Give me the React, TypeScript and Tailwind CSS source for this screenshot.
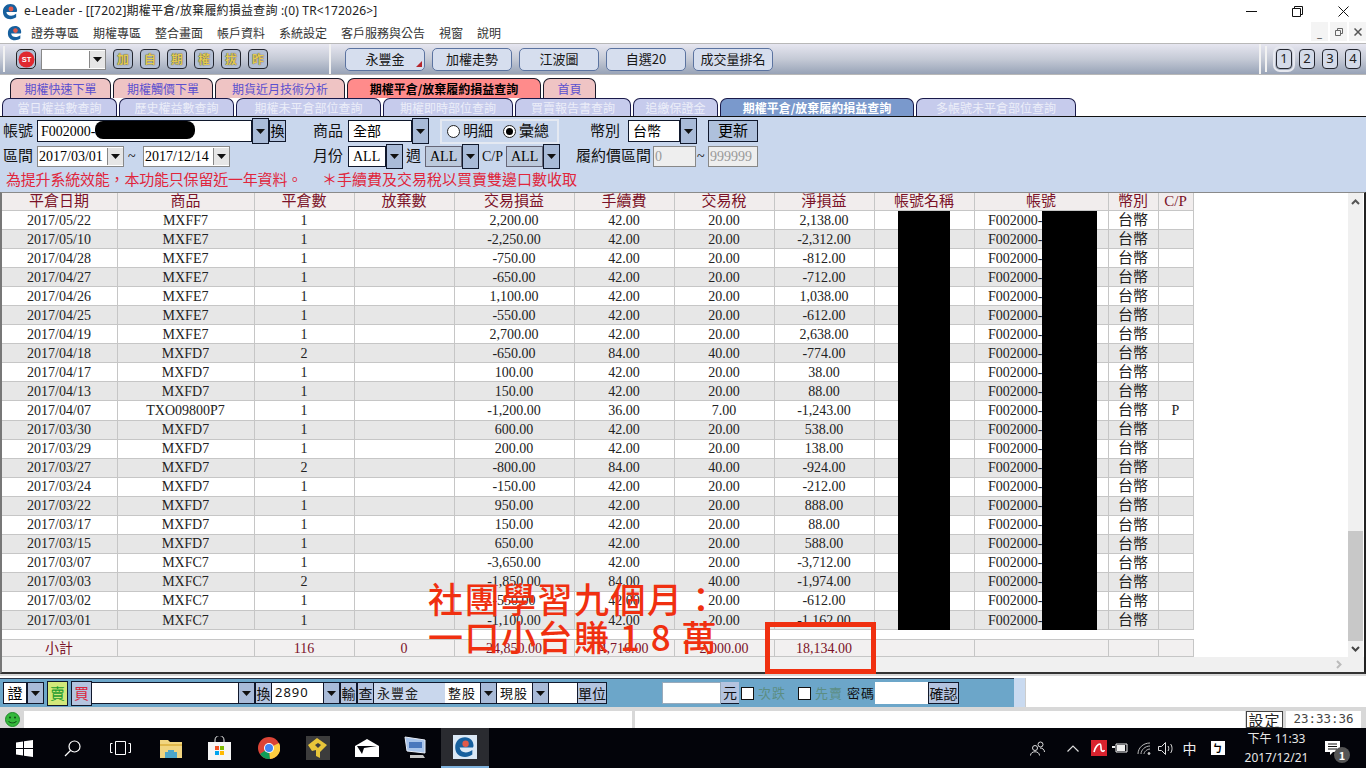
import React from 'react';

const rows = [
  ['2017/05/22', 'MXFF7', '1', '2,200.00', '42.00', '20.00', '2,138.00', ''],
  ['2017/05/10', 'MXFE7', '1', '-2,250.00', '42.00', '20.00', '-2,312.00', ''],
  ['2017/04/28', 'MXFE7', '1', '-750.00', '42.00', '20.00', '-812.00', ''],
  ['2017/04/27', 'MXFE7', '1', '-650.00', '42.00', '20.00', '-712.00', ''],
  ['2017/04/26', 'MXFE7', '1', '1,100.00', '42.00', '20.00', '1,038.00', ''],
  ['2017/04/25', 'MXFE7', '1', '-550.00', '42.00', '20.00', '-612.00', ''],
  ['2017/04/19', 'MXFE7', '1', '2,700.00', '42.00', '20.00', '2,638.00', ''],
  ['2017/04/18', 'MXFD7', '2', '-650.00', '84.00', '40.00', '-774.00', ''],
  ['2017/04/17', 'MXFD7', '1', '100.00', '42.00', '20.00', '38.00', ''],
  ['2017/04/13', 'MXFD7', '1', '150.00', '42.00', '20.00', '88.00', ''],
  ['2017/04/07', 'TXO09800P7', '1', '-1,200.00', '36.00', '7.00', '-1,243.00', 'P'],
  ['2017/03/30', 'MXFD7', '1', '600.00', '42.00', '20.00', '538.00', ''],
  ['2017/03/29', 'MXFD7', '1', '200.00', '42.00', '20.00', '138.00', ''],
  ['2017/03/27', 'MXFD7', '2', '-800.00', '84.00', '40.00', '-924.00', ''],
  ['2017/03/24', 'MXFD7', '1', '-150.00', '42.00', '20.00', '-212.00', ''],
  ['2017/03/22', 'MXFD7', '1', '950.00', '42.00', '20.00', '888.00', ''],
  ['2017/03/17', 'MXFD7', '1', '150.00', '42.00', '20.00', '88.00', ''],
  ['2017/03/15', 'MXFD7', '1', '650.00', '42.00', '20.00', '588.00', ''],
  ['2017/03/07', 'MXFC7', '1', '-3,650.00', '42.00', '20.00', '-3,712.00', ''],
  ['2017/03/03', 'MXFC7', '2', '-1,850.00', '84.00', '40.00', '-1,974.00', ''],
  ['2017/03/02', 'MXFC7', '1', '-550.00', '42.00', '20.00', '-612.00', ''],
  ['2017/03/01', 'MXFC7', '1', '-1,100.00', '42.00', '20.00', '-1,162.00', ''],
];

const headers = ['平倉日期', '商品', '平倉數', '放棄數', '交易損益', '手續費', '交易稅', '淨損益', '帳號名稱', '帳號', '幣別', 'C/P'];

const gridCols = 'grid grid-cols-[116px_137px_100px_100px_120px_100px_100px_100px_100px_134px_50px_35px] w-[1192px]';
const cell = 'flex items-center justify-center pr-px border-r border-b border-[#c6c6c6] overflow-hidden whitespace-nowrap';

const Logo = ({ size = 18 }: { size?: number }) => (
  <svg width={size} height={size} viewBox="0 0 18 18">
    <path d="M15.5 9.5H4.6c.4 2.6 2.4 4 5 4 2 0 3.7-.7 5.4-2v3.7c-1.7 1.3-3.7 1.9-6 1.9C4 17.100 1 14 1 9.200 1 4.300 4.300 1 9 1c4.300 0 7 3 7 7.200z" fill="#17609e" />
    <circle cx="9.500" cy="6.300" r="2.600" fill="#e25a4a" />
  </svg>
);

const Caret = () => (
  <svg width="9" height="5" viewBox="0 0 9 5"><path d="M0 0h9L4.500 5z" fill="#111" /></svg>
);

const Dd = ({ className = '' }: { className?: string }) => (
  <div className={`flex items-center justify-center bg-[#a9bbd8] border border-[#10182c] w-[17px] h-full shrink-0 ${className}`}>
    <Caret />
  </div>
);

const GreyDd = () => (
  <div className="flex items-center justify-center bg-[#e6e6e6] border-l border-[#888] w-[16px] h-[17px] shrink-0">
    <Caret />
  </div>
);

const ToolSquare = ({ t }: { t: string }) => (
  <div className="flex items-center justify-center w-[20px] h-[20px] mr-[7px] rounded-[4px] border border-[#23262f] bg-[#b3bfd4] text-[12px] leading-none font-bold text-[#e3cb52] [text-shadow:0_0_1px_#222]">{t}</div>
);

const ToolBtn = ({ t, mark }: { t: string; mark?: boolean }) => (
  <div className="relative flex items-center justify-center w-[80px] h-[23px] mr-[7px] rounded-[5px] border border-[#5b73a0] bg-[#d6deee] text-[13px] text-[#161616]">
    {t}
    {mark && <div className="absolute right-[2px] bottom-[3px] w-0 h-0 border-l-[6px] border-l-transparent border-b-[6px] border-b-[#b5252c]" />}
  </div>
);

const NumBtn = ({ t, ml }: { t: string; ml: string }) => (
  <div className={`flex items-center justify-center w-[16px] h-[20px] rounded-[4px] border border-[#23262f] bg-[#d4dbe9] font-['Noto_Sans'] text-[13px] text-[#222] ${ml}`}>{t}</div>
);

const TopTab = ({ t, w, active }: { t: string; w: string; active?: boolean }) => (
  <div className={`flex items-center justify-center h-[20px] rounded-t-[7px] border border-b-0 border-[#1a1a2a] text-[12px] ${w} ${active ? 'bg-[#ff8b8b] text-black font-bold' : 'bg-[#efc4c4] text-[#5b50cf]'}`}>{t}</div>
);

const SubTab = ({ t, w, active }: { t: string; w: string; active?: boolean }) => (
  <div className={`flex items-center justify-center h-[18px] rounded-t-[7px] border border-b-0 border-[#1a1a4a] text-[12px] ${w} ${active ? 'bg-[#7a99cc] text-white font-bold' : 'bg-[#c6cbec] text-[#eceef9]'}`}>{t}</div>
);

const Label = ({ t, className = '' }: { t: string; className?: string }) => (
  <span className={`text-[15px] leading-none text-[#111] whitespace-nowrap ${className}`}>{t}</span>
);

const OrderBtn = ({ t, w, className = '' }: { t: string; w: string; className?: string }) => (
  <div className={`flex items-center justify-center h-full border border-[#10182c] bg-[#b4c4df] text-[14px] text-[#111] shrink-0 ${w} ${className}`}>{t}</div>
);

const OrderField = ({ t = '', w, className = '' }: { t?: string; w: string; className?: string }) => (
  <div className={`flex items-center pl-[3px] h-full bg-white border-y border-[#10182c] text-[13px] tracking-[1px] text-[#111] shrink-0 ${w} ${className}`}>{t}</div>
);

const Slot = ({ w, children, className = '' }: { w: string; children: React.ReactNode; className?: string }) => (
  <div className={`flex items-center justify-center h-full shrink-0 ${w} ${className}`}>{children}</div>
);

export default function App() {
  return (
    <div className="relative w-[1366px] h-[768px] overflow-hidden bg-white flex flex-col font-['Noto_Sans_CJK_TC',sans-serif]">
      {/* title bar */}
      <div className="flex items-center h-[22px] shrink-0 pl-[2px]">
        <Logo size={17} />
        <span className="ml-[5px] text-[12px] tracking-[0.2px] text-[#222] whitespace-nowrap font-['Noto_Sans','Noto_Sans_CJK_TC',sans-serif]">e-Leader - [[7202]期權平倉/放棄履約損益查詢 :(0) TR&lt;172026&gt;]</span>
        <div className="ml-auto flex items-center h-full">
          <Slot w="w-[46px]">
            <svg width="11" height="11" viewBox="0 0 11 11"><path d="M0 5.500h11" stroke="#111" /></svg>
          </Slot>
          <Slot w="w-[46px]">
            <svg width="11" height="11" viewBox="0 0 11 11" fill="none" stroke="#111"><path d="M.5 2.500h8v8h-8zM2.500 2.500v-2h8v8h-2" /></svg>
          </Slot>
          <Slot w="w-[46px]">
            <svg width="11" height="11" viewBox="0 0 11 11" stroke="#111"><path d="M.5.500l10 10M10.500.500l-10 10" /></svg>
          </Slot>
        </div>
      </div>

      {/* menu bar */}
      <div className="flex items-center h-[21px] shrink-0 pl-[7px] text-[12px] text-[#333]">
        <Logo size={16} />
        <span className="ml-[8px] whitespace-nowrap">證券專區</span>
        <span className="ml-[14px] whitespace-nowrap">期權專區</span>
        <span className="ml-[14px] whitespace-nowrap">整合畫面</span>
        <span className="ml-[14px] whitespace-nowrap">帳戶資料</span>
        <span className="ml-[14px] whitespace-nowrap">系統設定</span>
        <span className="ml-[14px] whitespace-nowrap">客戶服務與公告</span>
        <span className="ml-[14px] whitespace-nowrap">視窗</span>
        <span className="ml-[14px] whitespace-nowrap">說明</span>
        <div className="ml-auto flex h-full gap-[2px] pb-[2px]">
          <div className="flex items-end justify-center w-[17px] pb-[3px] bg-[#f4f4f4] text-[9px] font-bold text-[#555] leading-none">_</div>
          <div className="flex items-center justify-center w-[17px] bg-[#f4f4f4]">
            <svg width="8" height="8" viewBox="0 0 8 8" fill="none" stroke="#666"><path d="M.5 2.500h5v5h-5zM2.500 2.500v-2h5v5h-2" /></svg>
          </div>
          <div className="flex items-center justify-center w-[17px] bg-[#f4f4f4]">
            <svg width="8" height="8" viewBox="0 0 8 8" stroke="#555" strokeWidth="1.500"><path d="M.5.500l7 7M7.500.500l-7 7" /></svg>
          </div>
        </div>
      </div>

      {/* toolbar */}
      <div className="flex items-center h-[32px] shrink-0 border-y border-[#b8b8b8] bg-linear-to-b from-[#e6e6f0] via-[#c5cad6] to-[#98a3b7]">
        <div className="ml-[3px] w-[2px] h-[26px] bg-[#f2f2f2]" />
        <div className="ml-[11px] flex items-center justify-center w-[20px] h-[20px] rounded-[5px] border border-[#222] bg-[#b3bfd4]">
          <svg width="17" height="17" viewBox="0 0 17 17">
            <circle cx="8.500" cy="8.500" r="8" fill="#e0282f" />
            <text x="8.500" y="11" textAnchor="middle" fontSize="7.500" fontWeight="700" fill="#fff" fontFamily="Liberation Sans">ST</text>
          </svg>
        </div>
        <div className="ml-[5px] flex items-center justify-end w-[65px] h-[21px] bg-white border border-[#888]">
          <GreyDd />
        </div>
        <div className="ml-[7px] flex items-center">
          <ToolSquare t="加" />
          <ToolSquare t="自" />
          <ToolSquare t="期" />
          <ToolSquare t="權" />
          <ToolSquare t="拔" />
          <ToolSquare t="昨" />
        </div>
        <div className="ml-[54px] w-[2px] h-[30px] bg-[#f2f2f2]" />
        <div className="ml-[14px] flex items-center">
          <ToolBtn t="永豐金" mark />
          <ToolBtn t="加權走勢" />
          <ToolBtn t="江波圖" />
          <ToolBtn t="自選20" />
          <ToolBtn t="成交量排名" />
        </div>
        <div className="ml-auto flex items-center pr-[5px]">
          <div className="w-[2px] h-[30px] bg-[#f2f2f2] mr-[4px]" />
          <div className="w-[2px] h-[26px] bg-[#f2f2f2]" />
          <NumBtn t="1" ml="ml-[9px] outline-2 outline-offset-1 outline-[#e6e8ef]" />
          <NumBtn t="2" ml="ml-[7px]" />
          <NumBtn t="3" ml="ml-[7px]" />
          <NumBtn t="4" ml="ml-[7px]" />
        </div>
      </div>

      {/* tabs */}
      <div className="mt-[3px] flex h-[20px] shrink-0 gap-[2px] pl-[10px]">
        <TopTab t="期權快速下單" w="w-[101px]" />
        <TopTab t="期權觸價下單" w="w-[100px]" />
        <TopTab t="期貨近月技術分析" w="w-[130px]" />
        <TopTab t="期權平倉/放棄履約損益查詢" w="w-[194px]" active />
        <TopTab t="首頁" w="w-[53px]" />
      </div>
      <div className="flex h-[18px] shrink-0 gap-[2px] pl-[2px]">
        <SubTab t="當日權益數查詢" w="w-[115px]" />
        <SubTab t="歷史權益數查詢" w="w-[115px]" />
        <SubTab t="期權未平倉部位查詢" w="w-[145px]" />
        <SubTab t="期權即時部位查詢" w="w-[130px]" />
        <SubTab t="買賣報告書查詢" w="w-[116px]" />
        <SubTab t="追繳保證金" w="w-[85px]" />
        <SubTab t="期權平倉/放棄履約損益查詢" w="w-[194px]" active />
        <SubTab t="多帳號未平倉部位查詢" w="w-[160px]" />
      </div>

      {/* query panel */}
      <div className="flex flex-col h-[76px] shrink-0 border-t border-[#111] bg-[#c9d7ed] font-['Liberation_Serif','Noto_Sans_CJK_TC',serif]">
        <div className="flex items-center h-[26px] mt-[1px] pl-[3px]">
          <Label t="帳號" className="w-[34px]" />
          <div className="flex items-center pl-[3px] w-[215px] h-[22px] bg-white border border-[#10182c] text-[14px]">F002000-</div>
          <Dd className="h-[22px]" />
          <div className="flex items-center justify-center w-[17px] h-[22px] bg-[#b4c4df] border border-[#10182c] text-[14px]">換</div>
          <Label t="商品" className="ml-[27px] w-[35px]" />
          <div className="flex items-center pl-[4px] w-[64px] h-[22px] bg-white border border-[#10182c] text-[14px]">全部</div>
          <Dd className="h-[22px]" />
          <div className="ml-[11px] flex items-center w-[119px] h-[25px] border-2 border-[#e4e9f2] pl-[5px]">
            <span className="flex items-center justify-center w-[13px] h-[13px] rounded-full bg-white border border-[#222]" />
            <Label t="明細" className="ml-[3px]" />
            <span className="ml-[10px] flex items-center justify-center w-[13px] h-[13px] rounded-full bg-white border border-[#222]">
              <span className="w-[7px] h-[7px] rounded-full bg-black" />
            </span>
            <Label t="彙總" className="ml-[3px]" />
          </div>
          <Label t="幣別" className="ml-[31px] w-[38px]" />
          <div className="flex items-center pl-[4px] w-[52px] h-[22px] bg-white border border-[#10182c] text-[14px]">台幣</div>
          <Dd className="h-[22px]" />
          <div className="ml-[11px] flex items-center justify-center w-[50px] h-[22px] bg-[#aec0dc] border border-[#10182c] text-[15px]">更新</div>
        </div>
        <div className="flex items-center h-[25px] pl-[3px]">
          <Label t="區間" className="w-[34px]" />
          <div className="flex items-center justify-between pl-[1px] w-[87px] h-[21px] bg-white border border-[#888] text-[14px]">
            2017/03/01
            <GreyDd />
          </div>
          <span className="ml-[4px] w-[15px] text-[14px]">~</span>
          <div className="flex items-center justify-between pl-[1px] w-[87px] h-[21px] bg-white border border-[#888] text-[14px]">
            2017/12/14
            <GreyDd />
          </div>
          <Label t="月份" className="ml-[83px] w-[35px]" />
          <div className="flex items-center pl-[4px] w-[38px] h-[21px] bg-white border border-[#10182c] text-[14px]">ALL</div>
          <Dd className="h-[21px] w-[16px]" />
          <Label t="週" className="ml-[3px] w-[19px]" />
          <div className="flex items-center pl-[4px] w-[37px] h-[21px] bg-[#bcc9dc] border border-[#667] text-[14px]">ALL</div>
          <Dd className="h-[21px]" />
          <span className="ml-[3px] w-[24px] text-[14px] text-[#111]">C/P</span>
          <div className="flex items-center pl-[4px] w-[37px] h-[21px] bg-[#bcc9dc] border border-[#667] text-[14px]">ALL</div>
          <Dd className="h-[21px] w-[16px]" />
          <Label t="履約價區間" className="ml-[16px] w-[77px]" />
          <div className="flex items-center pl-[1px] w-[43px] h-[21px] bg-[#eeeeee] border border-[#888] text-[14px] text-[#999]">0</div>
          <span className="ml-[1px] w-[11px] text-[14px]">~</span>
          <div className="flex items-center pl-[1px] w-[50px] h-[21px] bg-[#eeeeee] border border-[#888] text-[14px] text-[#999]">999999</div>
        </div>
        <div className="flex items-center h-[22px] pl-[6px] text-[15px] leading-none text-[#e0263c] whitespace-nowrap">
          <span className="w-[316px] tracking-[-0.2px]">為提升系統效能，本功能只保留近一年資料。</span>
          <span>＊手續費及交易稅以買賣雙邊口數收取</span>
        </div>
      </div>

      {/* results */}
      <div className="relative flex flex-col h-[482px] shrink-0 border-t border-[#8a8a8a] border-r-2 border-r-[#222] border-l-2 border-l-[#777] border-b-2 border-b-[#333] bg-white font-['Liberation_Serif','Noto_Sans_CJK_TC',serif] text-[14px] text-[#222]">
        <div className="flex h-[464px] shrink-0">
          <div className="flex flex-col w-[1345px]">
            <div className={`${gridCols} h-[18px] shrink-0 bg-[#f1eded] text-[15px] text-[#7b1228]`}>
              {headers.map(h => (
                <div key={h} className={cell}>{h}</div>
              ))}
            </div>
            {rows.map((r, i) => (
              <div key={r[0] + r[1]} className={`${gridCols} h-[19.05px] shrink-0 ${i % 2 ? 'bg-[#e7e7e7]' : 'bg-white'}`}>
                <div className={cell}>{r[0]}</div>
                <div className={cell}>{r[1]}</div>
                <div className={cell}>{r[2]}</div>
                <div className={cell}></div>
                <div className={cell}>{r[3]}</div>
                <div className={cell}>{r[4]}</div>
                <div className={cell}>{r[5]}</div>
                <div className={cell}>{r[6]}</div>
                <div className={cell}></div>
                <div className={`${cell} justify-start! pl-[13px]`}>F002000-</div>
                <div className={`${cell} text-[15px]`}>台幣</div>
                <div className={cell}>{r[7]}</div>
              </div>
            ))}
            <div className={`${gridCols} h-[18px] mt-[9px] shrink-0 bg-[#f2f0f0] border-t border-[#c6c6c6] text-[#7b1228]`}>
              <div className={cell}>小計</div>
              <div className={cell}></div>
              <div className={cell}>116</div>
              <div className={cell}>0</div>
              <div className={cell}>24,850.00</div>
              <div className={cell}>4,716.00</div>
              <div className={cell}>2,000.00</div>
              <div className={cell}>18,134.00</div>
              <div className={cell}></div>
              <div className={cell}></div>
              <div className={cell}></div>
              <div className={cell}></div>
            </div>
          </div>
          <div className="flex flex-col items-center justify-between w-[15px] ml-auto mr-[1px] bg-[#f0f0f0]">
            <div className="flex h-[338px] w-full items-start justify-center pt-[6px]">
              <svg width="9" height="6" viewBox="0 0 9 6" fill="none" stroke="#555" strokeWidth="2"><path d="M1 5l3.500-3.500L8 5" /></svg>
            </div>
            <div className="w-full h-[110px] bg-[#c8c8c8]" />
            <div className="flex h-[16px] w-full items-center justify-center">
              <svg width="9" height="6" viewBox="0 0 9 6" fill="none" stroke="#444" strokeWidth="2"><path d="M1 1l3.500 3.500L8 1" /></svg>
            </div>
          </div>
        </div>
        <div className="flex flex-1 items-center justify-end pr-[22px] bg-[#f0f0f0]">
          <svg width="6" height="9" viewBox="0 0 6 9" fill="none" stroke="#bbb" strokeWidth="2"><path d="M1 1l3.500 3.500L1 8" /></svg>
        </div>
      </div>

      {/* order bar */}
      <div className="flex h-[33px] shrink-0 bg-white border-t-2 border-[#d9d9d9] pt-[2px]">
        <div className="flex items-center w-[1014px] h-[29px] py-[3px] pl-[3px] bg-[#6ca6c9] border-t border-[#2a3548]">
          <div className="flex items-center justify-center w-[24px] h-full bg-white border border-[#10182c] text-[15px]">證</div>
          <Dd />
          <div className="ml-[3px] flex items-center justify-center w-[21px] h-[25px] bg-[#d2e87a] border border-[#10182c] text-[15px] text-[#1d9d2e]">賣</div>
          <div className="ml-[3px] flex items-center justify-center w-[21px] h-[25px] bg-[#b4c4df] border border-[#10182c] text-[15px] text-[#d9243c]">買</div>
          <OrderField w="w-[146px]" />
          <Dd />
          <OrderBtn t="換" w="w-[17px]" />
          <OrderField t="2890" w="w-[51px]" className="font-['Noto_Sans']" />
          <Dd />
          <OrderBtn t="輸" w="w-[17px]" />
          <OrderBtn t="查" w="w-[17px]" />
          <div className="flex items-center pl-[3px] w-[71px] h-full bg-[#c9d7ed] border-y border-[#10182c] text-[13px] tracking-[1px] text-[#222]">永豐金</div>
          <OrderField t="整股" w="w-[35px]" />
          <Dd />
          <OrderField t="現股" w="w-[35px]" />
          <Dd />
          <OrderField w="w-[28px]" className="border-0" />
          <OrderBtn t="單位" w="w-[30px]" />
          <div className="ml-[55px] w-[59px] h-full bg-white border border-[#9ab]" />
          <OrderBtn t="元" w="w-[18px]" className="border-0 border-b border-b-[#10182c]" />
          <div className="ml-[2px] w-[13px] h-[13px] bg-white border border-[#111]" />
          <span className="ml-[4px] w-[40px] text-[13px] tracking-[1px] text-[#5c8e84]">次跌</span>
          <div className="w-[13px] h-[13px] bg-white border border-[#111]" />
          <span className="ml-[4px] w-[32px] text-[13px] tracking-[1px] text-[#5c8e84]">先賣</span>
          <span className="w-[28px] text-[13px] tracking-[1px] text-[#111]">密碼</span>
          <div className="w-[53px] h-full bg-white" />
          <OrderBtn t="確認" w="w-[31px]" />
        </div>
        <div className="w-[11px] h-[29px] bg-[#c9daf0]" />
        <div className="w-px h-[29px] bg-[#cccccc]" />
      </div>

      {/* status bar */}
      <div className="flex items-stretch h-[21px] shrink-0 pt-[4px] bg-[#d8d8d8]">
        <div className="flex items-center justify-center w-[24px]">
          <svg width="15" height="15" viewBox="0 0 15 15">
            <circle cx="7.500" cy="7.500" r="7" fill="#35b83c" stroke="#1f8a2a" />
            <circle cx="5" cy="5.500" r="1" fill="#0d4d16" />
            <circle cx="10" cy="5.500" r="1" fill="#0d4d16" />
            <path d="M3.500 9c1 2.500 7 2.500 8 0" fill="none" stroke="#0d4d16" />
          </svg>
        </div>
        <div className="w-[608px] bg-white" />
        <div className="ml-[3px] w-[610px] bg-white" />
        <div className="ml-px flex items-center justify-center w-[37px] bg-white border border-[#444] text-[15px] leading-none tracking-[1px] text-[#222]">設定</div>
        <div className="ml-[3px] flex items-center justify-center w-[75px] bg-white font-['DejaVu_Sans_Mono',monospace] text-[12.5px] text-[#444]">23:33:36</div>
      </div>

      {/* windows taskbar */}
      <div className="flex items-center h-[41px] flex-1 bg-[#03040a] text-white">
        <Slot w="w-[48px]">
          <svg width="17" height="17" viewBox="0 0 17 17" fill="#fff"><path d="M0 2.500l7-1v6.500H0zM8 1.300L17 0v8H8zM0 9h7v6.500l-7-1zM8 9h9v8l-9-1.300z" /></svg>
        </Slot>
        <Slot w="w-[48px]">
          <svg width="17" height="17" viewBox="0 0 17 17" fill="none" stroke="#fff" strokeWidth="1.200"><circle cx="10.500" cy="6.500" r="5.500" /><path d="M6.500 10.500L1 16" /></svg>
        </Slot>
        <Slot w="w-[48px]">
          <svg width="21" height="14" viewBox="0 0 21 14" fill="none" stroke="#fff"><path d="M5.500.5h10v13h-10zM2.500 2.500h-2v9h2M18.500 2.500h2v9h-2" /></svg>
        </Slot>
        <Slot w="w-[48px]" className="ml-[3px]">
          <svg width="22" height="19" viewBox="0 0 22 19"><path d="M0 1h8l2 2h12v16H0z" fill="#f1d580" /><path d="M0 5h22v2H0z" fill="#e0b84c" /><path d="M5 19v-6h3v-2h6v2h3v6z" fill="#4ea6c9" /></svg>
        </Slot>
        <Slot w="w-[48px]">
          <svg width="23" height="24" viewBox="0 0 23 24"><path d="M7 6V4a4.500 4.500 0 019 0v2" fill="none" stroke="#eee" /><path d="M0 6h23v18H0z" fill="#f5f5f5" /><path d="M7 10h4v4H7z" fill="#f25022" /><path d="M12 10h4v4h-4z" fill="#7fba00" /><path d="M7 15h4v4H7z" fill="#00a4ef" /><path d="M12 15h4v4h-4z" fill="#ffb900" /></svg>
        </Slot>
        <Slot w="w-[48px]" className="ml-[2px]">
          <svg width="22" height="22" viewBox="0 0 22 22">
            <circle cx="11" cy="11" r="11" fill="#db4437" />
            <path d="M11 11L2 17a11 11 0 0010 5z" fill="#0f9d58" />
            <path d="M11 11l1 11a11 11 0 009-16z" fill="#ffcd40" />
            <circle cx="11" cy="11" r="5" fill="#fff" />
            <circle cx="11" cy="11" r="4" fill="#4285f4" />
          </svg>
        </Slot>
        <Slot w="w-[48px]" className="ml-[1px]">
          <svg width="24" height="24" viewBox="0 0 24 24"><path d="M0 0h24v24H0z" fill="#3c3c3c" /><path d="M2 9l9-7 10 7-7 7v6l-4-2v-6l-4 1z" fill="#e8c63a" /><path d="M9 9l3-2 3 2-3 3z" fill="#3c3c3c" /></svg>
        </Slot>
        <Slot w="w-[48px]" className="ml-[1px]">
          <svg width="24" height="18" viewBox="0 0 24 18"><path d="M0 7L12 0l12 7v11H0z" fill="#fff" /><path d="M2 7h20L9 9l-2 6z" fill="#03040a" /></svg>
        </Slot>
        <Slot w="w-[48px]" className="ml-[1px]">
          <svg width="24" height="24" viewBox="0 0 24 24"><path d="M1 1l20 3v13L3 15z" fill="#a8c4ea" stroke="#e8eef7" /><path d="M5 6h13v6H5z" fill="#4a78bd" /><path d="M6 19h13l2 3H6z" fill="#c8c8c8" /></svg>
        </Slot>
        <Slot w="w-[48px]" className="ml-[1px] bg-[#2a2b30] border-b-2 border-[#7fb2dd]">
          <div className="flex items-center justify-center w-[24px] h-[24px] bg-[#dbe8f5]"><Logo size={22} /></div>
        </Slot>
        <div className="ml-auto flex items-center h-full">
          <Slot w="w-[24px]">
            <svg width="15" height="15" viewBox="0 0 15 15" fill="none" stroke="#ddd"><circle cx="5" cy="7" r="2.500" /><circle cx="10.500" cy="3.500" r="2.500" /><path d="M.5 14.500c0-5 9-5 9 0M10 7c2.500 0 4.500 1.500 4.500 4" /></svg>
          </Slot>
          <Slot w="w-[32px]" className="ml-[8px] mr-[2px]">
            <svg width="12" height="7" viewBox="0 0 12 7" fill="none" stroke="#ddd" strokeWidth="1.200"><path d="M.5 6.500L6 1l5.500 5.500" /></svg>
          </Slot>
          <Slot w="w-[16px]">
            <div className="flex items-center justify-center w-[16px] h-[16px] bg-[#d9232e]">
              <svg width="12" height="10" viewBox="0 0 12 10" fill="none" stroke="#fff" strokeWidth="1.600"><path d="M1 9c1-5 4-8 6-8 1.500 0 .5 5 1.500 6.500S11 8 11.500 7" /></svg>
            </div>
          </Slot>
          <Slot w="w-[24px]" className="ml-[1px]">
            <svg width="16" height="10" viewBox="0 0 16 10"><path d="M4 1h11v8H4z" fill="none" stroke="#eee" /><path d="M5 2h8v6H5z" fill="#eee" /><path d="M0 3h3v2H0z" fill="#eee" /></svg>
          </Slot>
          <Slot w="w-[24px]">
            <svg width="14" height="13" viewBox="0 0 14 13" fill="none" stroke="#bbb"><path d="M1 12C1 6 6 1 13 1M4 12c0-4 4-8 9-8M7 12c0-2 3-5 6-5" /><circle cx="12" cy="11.500" r="1" fill="#eee" /></svg>
          </Slot>
          <Slot w="w-[20px]">
            <svg width="16" height="13" viewBox="0 0 16 13" fill="none" stroke="#ddd"><path d="M.5 4.500h3l4-4v12l-4-4h-3zM10 4c1 1 1 4 0 5M12.500 2c2 2 2 7 0 9" /></svg>
          </Slot>
          <Slot w="w-[27px]" className="text-[14px] text-[#eee]">中</Slot>
          <Slot w="w-[27px]" className="ml-[1px]">
            <div className="flex items-center justify-center w-[14px] h-[14px] bg-white text-[10px] leading-none font-bold text-black">ㄅ</div>
          </Slot>
          <div className="ml-[8px] flex flex-col items-center w-[75px] text-[12px] leading-[19px] text-[#e8e8e8] font-['Noto_Sans','Noto_Sans_CJK_TC',sans-serif]">
            <span>下午 11:33</span>
            <span>2017/12/21</span>
          </div>
          <div className="relative ml-[11px] mr-[16px] flex h-full w-[25px] items-center">
            <svg width="15" height="14" viewBox="0 0 15 14" fill="#fff"><path d="M0 0h15v11H8l-3 3v-3H0z" /><path d="M3 3h9M3 5.500h9M3 8h9" stroke="#111" /></svg>
            <div className="absolute right-0 top-[19px] flex h-[16px] w-[16px] items-center justify-center rounded-full bg-[#555] text-[11px] font-bold text-white">1</div>
          </div>
        </div>
      </div>

      {/* redactions and annotation on top of the screenshot */}
      <div className="absolute left-[95px] top-[121px] w-[100px] h-[18px] rounded-[8px] bg-black" />
      <div className="absolute left-[898px] top-[211px] w-[52px] h-[419px] bg-black" />
      <div className="absolute left-[1042px] top-[211px] w-[55px] h-[419px] bg-black" />
      <div className="absolute left-[428px] top-[579px] text-[35px] leading-[38px] tracking-[1.5px] font-medium text-[#f03010] whitespace-nowrap">
        <div>社團學習九個月：</div>
        <div>一口小台賺 1 8 萬</div>
      </div>
      <div className="absolute left-[765px] top-[622px] w-[111px] h-[52px] border-[5px] border-[#f03010]" />
    </div>
  );
}
